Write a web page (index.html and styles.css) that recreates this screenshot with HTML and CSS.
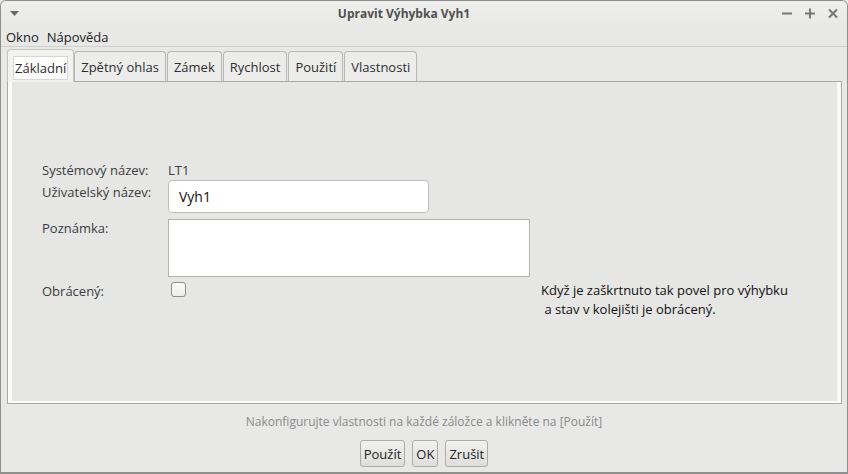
FILE: index.html
```html
<!DOCTYPE html>
<html lang="cs">
<head>
    <meta charset="UTF-8">
    <title>Upravit Výhybka Vyh1</title>
    <link rel="stylesheet" href="styles.css">
</head>
<body>
    <div class="window">
        <div class="titlebar">
            <div class="tb-left">
                <svg width="9" height="5" viewBox="0 0 9 5"><path d="M0 0h9L4.5 5z" fill="#6a6a6a"/></svg>
            </div>
            <div class="title">Upravit Výhybka Vyh1</div>
            <div class="tb-right">
                <svg width="12" height="12" viewBox="0 0 12 12"><path d="M1 6.5h10" stroke="#777" stroke-width="2"/></svg>
                <svg width="12" height="12" viewBox="0 0 12 12"><path d="M1 6.5h10M6 1.5v10" stroke="#777" stroke-width="2"/></svg>
                <svg width="12" height="12" viewBox="0 0 12 12"><path d="M2 2.5l8 8M10 2.5l-8 8" stroke="#777" stroke-width="2"/></svg>
            </div>
        </div>

        <div class="menubar">
            <span>Okno</span>
            <span>Nápověda</span>
        </div>

        <div class="tabs">
            <div class="tab active"><span class="focus">Základní</span></div>
            <div class="tab">Zpětný ohlas</div>
            <div class="tab">Zámek</div>
            <div class="tab">Rychlost</div>
            <div class="tab">Použití</div>
            <div class="tab">Vlastnosti</div>
        </div>

        <div class="panel">
            <div class="form">
                <div class="label">Systémový název:</div>
                <div class="value">LT1</div>
                <div></div>

                <div class="label top">Uživatelský název:</div>
                <div><div class="input">Vyh1</div></div>
                <div></div>

                <div class="label">Poznámka:</div>
                <div><div class="textarea"></div></div>
                <div></div>

                <div class="label chk">Obrácený:</div>
                <div><div class="checkbox"></div></div>
                <div class="note">Když je zaškrtnuto tak povel pro výhybku<br>&nbsp;a stav v kolejišti je obrácený.</div>
            </div>
        </div>

        <div class="status">Nakonfigurujte vlastnosti na každé záložce a klikněte na [Použít]</div>

        <div class="buttons">
            <button>Použít</button>
            <button>OK</button>
            <button>Zrušit</button>
        </div>
    </div>
</body>
</html>
```

FILE: styles.css
```css
body {
    margin: 0;
    font-family: "Open Sans", "Noto Sans", sans-serif;
    font-size: 13px;
    color: #3c3c3c;
    background: #e8e8e7;
}
.window {
    width: 848px;
    height: 474px;
    box-sizing: border-box;
    border: 1px solid #8f8f8f;
    border-bottom-width: 2px;
    border-radius: 6px 6px 0 0;
    background: #e8e8e7;
    display: flex;
    flex-direction: column;
    overflow: hidden;
}
.titlebar {
    height: 26px;
    flex: none;
    display: flex;
    align-items: center;
    background: linear-gradient(#efefee, #e8e8e7);
}
.tb-left {
    width: 80px;
    padding-left: 9px;
    box-sizing: border-box;
    display: flex;
    align-items: center;
    margin-top: -2px;
}
.title {
    flex: 1;
    text-align: center;
    font-weight: bold;
    font-size: 12px;
    color: #505050;
    margin-top: -2px;
}
.tb-right {
    width: 120px;
    box-sizing: border-box;
    display: flex;
    justify-content: flex-end;
    gap: 11px;
    padding-right: 8px;
    margin-top: -2px;
}
.menubar {
    height: 19px;
    flex: none;
    display: flex;
    gap: 8px;
    padding-left: 5px;
    align-items: center;
    color: #222;
    border-bottom: 1px solid #cfcfce;
}
.tabs {
    display: flex;
    align-items: flex-end;
    gap: 1px;
    padding-left: 6px;
    margin-top: 1px;
    height: 33px;
    flex: none;
}
.tab {
    height: 30px;
    box-sizing: border-box;
    padding: 0 6px;
    border: 1px solid #b8b8b7;
    border-bottom: none;
    border-radius: 4px 4px 0 0;
    background: #ececeb;
    display: flex;
    align-items: center;
    color: #2e2e2e;
}
.tab.active {
    height: 33px;
    padding: 0 5px;
    border-color: #c4c4c3;
    background: #f2f2f1;
    margin-right: -1px;
    position: relative;
    z-index: 1;
    margin-bottom: -1px;
}
.focus {
    border: 1px solid #d6d6d5;
    background: #fdfdfd;
    padding: 2px 1px;
    margin-top: 3px;
}
.panel {
    flex: none;
    height: 323px;
    box-sizing: border-box;
    margin: 0 5px 0 6px;
    border: 1px solid #a9a9a8;
    box-shadow: inset 4px 0 #fafafa, inset -4px 0 #fafafa, inset 0 -2px #fafafa;
    background: #e6e6e5;
    padding: 79px 0 0 34px;
}
.form {
    display: grid;
    grid-template-columns: 126px 373px auto;
    grid-template-rows: 19px 39px 62px auto;
    align-items: start;
}
.label {
    line-height: 18px;
}
.label.top {
    padding-top: 3px;
}
.label.chk {
    padding-top: 1px;
}
.value {
    line-height: 18px;
}
.input {
    width: 261px;
    height: 33px;
    box-sizing: border-box;
    border: 1px solid #bdbdbc;
    border-radius: 4px;
    background: #fff;
    padding: 0 10px;
    display: flex;
    align-items: center;
    font-size: 14px;
    color: #111;
}
.textarea {
    width: 362px;
    height: 58px;
    box-sizing: border-box;
    border: 1px solid #b2b2b1;
    background: #fff;
}
.checkbox {
    width: 15px;
    height: 15px;
    box-sizing: border-box;
    margin: 1px 0 0 3px;
    border: 1px solid #8c8c8b;
    border-radius: 3px;
    background: linear-gradient(#fafafa, #ececeb);
}
.note {
    line-height: 19px;
    color: #111;
}
.status {
    text-align: center;
    color: #8a8a8a;
    font-size: 12px;
    margin-top: 9px;
    line-height: 18px;
}
.buttons {
    display: flex;
    justify-content: center;
    gap: 7px;
    margin-top: 9px;
}
button {
    font-family: inherit;
    font-size: 13px;
    color: #222;
    height: 27px;
    padding: 0 3px;
    border: 1px solid #acacab;
    border-radius: 3px;
    background: linear-gradient(#f0f0ef, #dededd);
}
```
